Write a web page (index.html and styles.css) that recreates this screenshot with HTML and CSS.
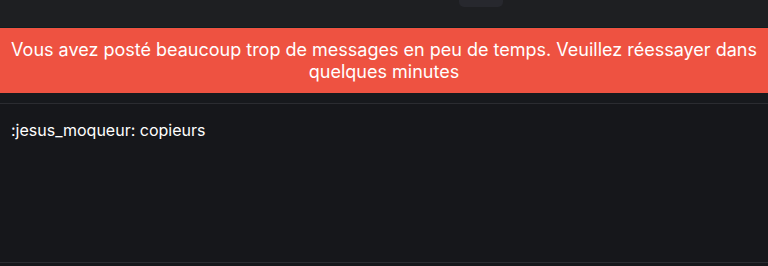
FILE: index.html
```html
<!DOCTYPE html>
<html lang="fr">
<head>
<meta charset="utf-8">
<title>Chat</title>
<link rel="stylesheet" href="styles.css">
</head>
<body>
<div class="topbar">
	<div class="topbar_btn"></div>
</div>
<div class="alert">
	Vous avez posté beaucoup trop de messages en peu de temps. Veuillez réessayer dans quelques minutes
</div>
<div class="spacer"></div>
<div class="composer">
	<div class="composer_text">:jesus_moqueur: copieurs</div>
</div>
</body>
</html>
```

FILE: styles.css
```css
body {
	margin: 0;
	background-color: #16171b;
	font-family: Inter, "Noto Sans", sans-serif;
	color: #ffffff;
}

.topbar {
	height: 27px;
	background-color: #1e1f22;
	border-bottom: 1px solid #0d1f22;
	display: flex;
	justify-content: flex-end;
	padding-right: 265px;
}

.topbar_btn {
	width: 44px;
	height: 7px;
	background-color: #27282e;
	border-radius: 0 0 5px 5px;
}

.alert {
	background-color: #ee5241;
	height: 65px;
	box-sizing: border-box;
	padding: 11px 6px 0 6px;
	font-size: 18px;
	line-height: 22px;
	text-align: center;
}

.spacer {
	height: 10px;
	background-color: #17191d;
	border-bottom: 1px solid #2b2c31;
}

.composer {
	height: 142px;
	background-color: #16171b;
	border-bottom: 1px solid #2b2c31;
	padding: 16px 11px 0 11px;
}

.composer_text {
	font-size: 16px;
	line-height: 20px;
}
```
